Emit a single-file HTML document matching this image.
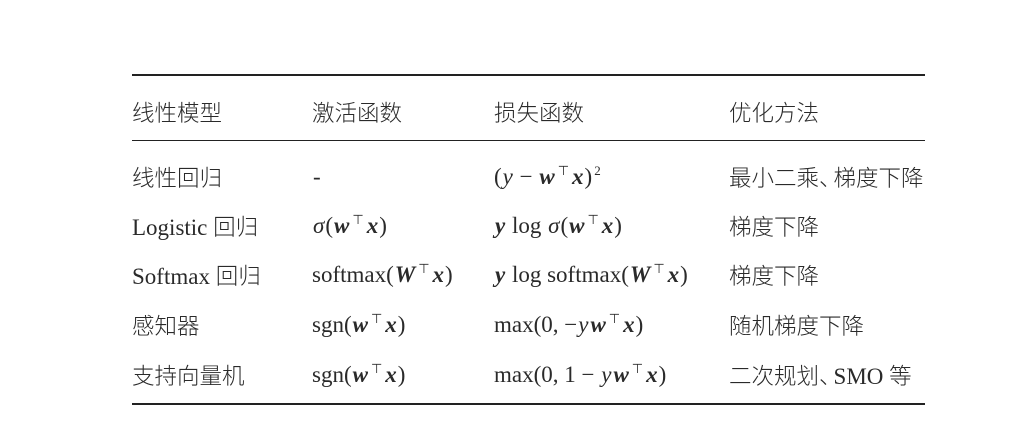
<!DOCTYPE html>
<html><head><meta charset="utf-8"><style>
body{margin:0;width:1015px;height:436px;background:#fff;position:relative;overflow:hidden;
font-family:"Liberation Serif","Noto Sans CJK SC",serif;color:#2a2a2a;font-size:23px}
.r{position:absolute;left:132px;width:793px;background:#222}
.t{position:absolute;white-space:nowrap;line-height:26px;transform:translateY(-13px)}
.cj{font-family:"Noto Sans CJK SC",sans-serif;font-weight:300;font-size:22.5px}
b{font-style:italic;margin:0 1px}
i{margin:0 1px}
sup{font-size:13px;vertical-align:0;position:relative;top:-9px;margin:0 2px}
.p{font-size:22px;letter-spacing:0.3px}
</style></head><body>
<div class="r" style="top:74px;height:2px"></div>
<div class="r" style="top:140px;height:1px"></div>
<div class="r" style="top:403px;height:2px"></div>

<div class="t cj" style="left:132px;top:112px">线性模型</div>
<div class="t cj" style="left:312px;top:112px">激活函数</div>
<div class="t cj" style="left:494px;top:112px">损失函数</div>
<div class="t cj" style="left:729px;top:112px">优化方法</div>

<div class="t cj" style="left:132px;top:177px">线性回归</div>
<div class="t" style="left:313px;top:177px">-</div>
<div class="t" style="left:494px;top:177px">(<i>y</i> − <b>w</b><sup>⊤</sup><b>x</b>)<sup>2</sup></div>
<div class="t cj" style="left:729px;top:177px">最小二乘<span style="margin-right:-8px">、</span>梯度下降</div>

<div class="t" style="left:132px;top:226px">Logistic <span class="cj">回归</span></div>
<div class="t" style="left:312px;top:226px"><i>σ</i>(<b>w</b><sup>⊤</sup><b>x</b>)</div>
<div class="t" style="left:494px;top:226px"><b>y</b> log <i>σ</i>(<b>w</b><sup>⊤</sup><b>x</b>)</div>
<div class="t cj" style="left:729px;top:226px">梯度下降</div>

<div class="t" style="left:132px;top:275px">Softmax <span class="cj">回归</span></div>
<div class="t" style="left:312px;top:275px">softmax(<b>W</b><sup>⊤</sup><b>x</b>)</div>
<div class="t" style="left:494px;top:275px"><b>y</b> log softmax(<b>W</b><sup>⊤</sup><b>x</b>)</div>
<div class="t cj" style="left:729px;top:275px">梯度下降</div>

<div class="t cj" style="left:132px;top:325px">感知器</div>
<div class="t" style="left:312px;top:325px">sgn(<b>w</b><sup>⊤</sup><b>x</b>)</div>
<div class="t" style="left:494px;top:325px">max(0, −<i>y</i><b>w</b><sup>⊤</sup><b>x</b>)</div>
<div class="t cj" style="left:729px;top:325px">随机梯度下降</div>

<div class="t cj" style="left:132px;top:375px">支持向量机</div>
<div class="t" style="left:312px;top:375px">sgn(<b>w</b><sup>⊤</sup><b>x</b>)</div>
<div class="t" style="left:494px;top:375px">max(0, 1 − <i>y</i><b>w</b><sup>⊤</sup><b>x</b>)</div>
<div class="t" style="left:729px;top:375px"><span class="cj">二次规划<span style="margin-right:-8px">、</span></span>SMO <span class="cj">等</span></div>
</body></html>
